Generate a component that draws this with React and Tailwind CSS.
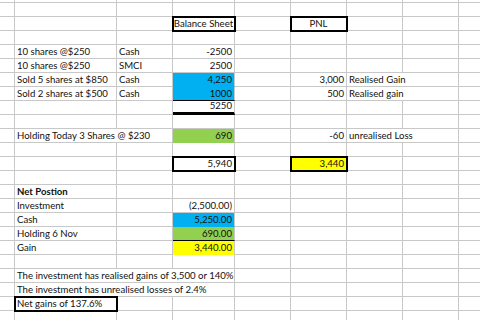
const COLS = 9

const spanClass = { 1: "", 2: "col-span-2", 3: "col-span-3" }

const boxed = "outline-2 -outline-offset-1 outline-black relative z-10"

// each entry: [column, span, text, extra classes]
const rows = [
  [],
  [],
  [
    [3, 1, "Balance Sheet", `justify-center ${boxed}`],
    [5, 1, "PNL", `justify-center ${boxed}`],
  ],
  [],
  [
    [1, 1, "10 shares @$250", ""],
    [2, 1, "Cash", ""],
    [3, 1, "-2500", "justify-end"],
  ],
  [
    [1, 1, "10 shares @$250", ""],
    [2, 1, "SMCI", ""],
    [3, 1, "2500", "justify-end"],
  ],
  [
    [1, 1, "Sold 5 shares at $850", ""],
    [2, 1, "Cash", ""],
    [3, 1, "4,250", "justify-end bg-[#00b0f0] border-b-[#00b0f0]"],
    [5, 1, "3,000", "justify-end"],
    [6, 2, "Realised Gain", ""],
  ],
  [
    [1, 1, "Sold 2 shares at $500", ""],
    [2, 1, "Cash", ""],
    [3, 1, "1000", "justify-end bg-[#00b0f0] border-b-black"],
    [5, 1, "500", "justify-end"],
    [6, 2, "Realised gain", ""],
  ],
  [[3, 1, "5250", "justify-end border-double border-b-[3px] border-b-black"]],
  [],
  [
    [1, 2, "Holding Today 3 Shares @ $230", ""],
    [3, 1, "690", "justify-end bg-[#92d050] border-b-[#92d050]"],
    [5, 1, "-60", "justify-end"],
    [6, 2, "unrealised Loss", ""],
  ],
  [],
  [
    [3, 1, "5,940", `justify-end ${boxed}`],
    [5, 1, "3,440", `justify-end bg-[#ffff00] ${boxed}`],
  ],
  [],
  [[1, 1, "Net Postion", "font-bold"]],
  [
    [1, 1, "Investment", ""],
    [3, 1, "(2,500.00)", "justify-end"],
  ],
  [
    [1, 1, "Cash", ""],
    [3, 1, "5,250.00", "justify-end bg-[#00b0f0] border-b-[#00b0f0]"],
  ],
  [
    [1, 1, "Holding 6 Nov", ""],
    [3, 1, "690.00", "justify-end bg-[#92d050] border-b-black"],
  ],
  [
    [1, 1, "Gain", ""],
    [3, 1, "3,440.00", "justify-end bg-[#ffff00] border-b-[#ffff00]"],
  ],
  [],
  [[1, 3, "The investment has realised gains of 3,500 or 140%", ""]],
  [[1, 3, "The investment has unrealised losses of 2.4%", ""]],
  [[1, 1, "Net gains of 137.6%", boxed]],
  [],
]

const buildRow = (cells) => {
  const out = []
  let col = 0
  const sorted = [...cells].sort((a, b) => a[0] - b[0])
  for (const [start, span, text, extra] of sorted) {
    while (col < start) {
      out.push({ span: 1, text: "", extra: "" })
      col++
    }
    out.push({ span, text, extra })
    col += span
  }
  while (col < COLS) {
    out.push({ span: 1, text: "", extra: "" })
    col++
  }
  return out
}

const App = () => {
  return (
    <div
      className="h-[320px] w-[480px] overflow-hidden bg-white text-[#111] text-[9.6px] leading-none"
      style={{ fontFamily: "Lato, 'Open Sans', sans-serif" }}
    >
      <div className="grid grid-cols-[15px_102px_56px_62px_56px_56px_56px_56px_56px]">
        {rows.map((cells, r) =>
          buildRow(cells).map((c, i) => (
            <div
              key={`${r}-${i}`}
              className={`flex items-end whitespace-nowrap border-solid border-r border-b border-[#c8c8c8] px-[2px] pb-[1px] ${r === 0 ? "h-[3px]" : "h-[14px]"} ${spanClass[c.span]} ${c.extra}`}
            >
              {c.text}
            </div>
          ))
        )}
      </div>
    </div>
  )
}

export default App
